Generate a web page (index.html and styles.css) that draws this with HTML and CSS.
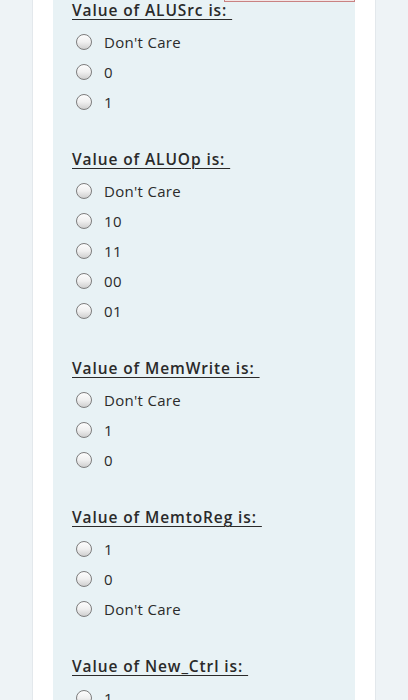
FILE: index.html
```html
<!DOCTYPE html>
<html>
<head>
<meta charset="utf-8">
<link rel="stylesheet" href="styles.css">
</head>
<body>
<div class="page">
  <div class="card">
    <div class="panel">
      <div class="answer-row"><div class="answer-box"></div></div>

      <section class="question">
        <h3 class="q-title">Value of ALUSrc is: </h3>
        <ul class="options">
          <li class="option"><span class="radio"></span><span class="label">Don't Care</span></li>
          <li class="option"><span class="radio"></span><span class="label">0</span></li>
          <li class="option"><span class="radio"></span><span class="label">1</span></li>
        </ul>
      </section>

      <section class="question">
        <h3 class="q-title">Value of ALUOp is: </h3>
        <ul class="options">
          <li class="option"><span class="radio"></span><span class="label">Don't Care</span></li>
          <li class="option"><span class="radio"></span><span class="label">10</span></li>
          <li class="option"><span class="radio"></span><span class="label">11</span></li>
          <li class="option"><span class="radio"></span><span class="label">00</span></li>
          <li class="option"><span class="radio"></span><span class="label">01</span></li>
        </ul>
      </section>

      <section class="question">
        <h3 class="q-title">Value of MemWrite is: </h3>
        <ul class="options">
          <li class="option"><span class="radio"></span><span class="label">Don't Care</span></li>
          <li class="option"><span class="radio"></span><span class="label">1</span></li>
          <li class="option"><span class="radio"></span><span class="label">0</span></li>
        </ul>
      </section>

      <section class="question">
        <h3 class="q-title">Value of MemtoReg is: </h3>
        <ul class="options">
          <li class="option"><span class="radio"></span><span class="label">1</span></li>
          <li class="option"><span class="radio"></span><span class="label">0</span></li>
          <li class="option"><span class="radio"></span><span class="label">Don't Care</span></li>
        </ul>
      </section>

      <section class="question">
        <h3 class="q-title">Value of New_Ctrl is: </h3>
        <ul class="options">
          <li class="option"><span class="radio"></span><span class="label">1</span></li>
        </ul>
      </section>
    </div>
  </div>
</div>
</body>
</html>
```

FILE: styles.css
```css
html, body {
  margin: 0;
  padding: 0;
  height: 100%;
  overflow: hidden;
}
body {
  background: #eef3f6;
  font-family: "Open Sans", "Liberation Sans", sans-serif;
  color: #2b2b2b;
}
.page {
  display: flex;
  justify-content: center;
}
.card {
  box-sizing: border-box;
  width: 344px;
  background: #ffffff;
  border-left: 1px solid #e3e8ec;
  border-right: 1px solid #e3e8ec;
  padding: 0 20px;
  min-height: 700px;
}
.panel {
  background: #e8f2f5;
  padding: 0 19px;
  min-height: 700px;
}
.answer-row {
  display: flex;
  justify-content: flex-end;
  margin-right: -19px;
}
.answer-box {
  box-sizing: border-box;
  width: 131px;
  height: 2px;
  border: 1px solid #c98282;
  border-top: none;
  background: #f3e6e6;
}
.question {
  margin: 0 0 34px 0;
}
.q-title {
  margin: 0;
  font-size: 15.5px;
  font-weight: 600;
  line-height: 16px;
  letter-spacing: 0.9px;
  color: #2a2a2a;
  text-decoration: underline;
  text-decoration-thickness: 1px;
  text-underline-offset: 3px;
  white-space: pre;
}
.options {
  list-style: none;
  margin: 9px 0 0 0;
  padding: 0;
}
.option {
  display: flex;
  align-items: center;
  height: 30px;
}
.radio {
  box-sizing: border-box;
  width: 16px;
  height: 16px;
  border-radius: 50%;
  border: 1px solid #7d7d7d;
  background: linear-gradient(to bottom, #fdfdfd 0%, #f0f0f0 50%, #cfcfcf 100%);
  margin-left: 4px;
  flex: none;
}
.label {
  margin-left: 12px;
  font-size: 15px;
  letter-spacing: 0.3px;
  color: #2b2b2b;
}
```
